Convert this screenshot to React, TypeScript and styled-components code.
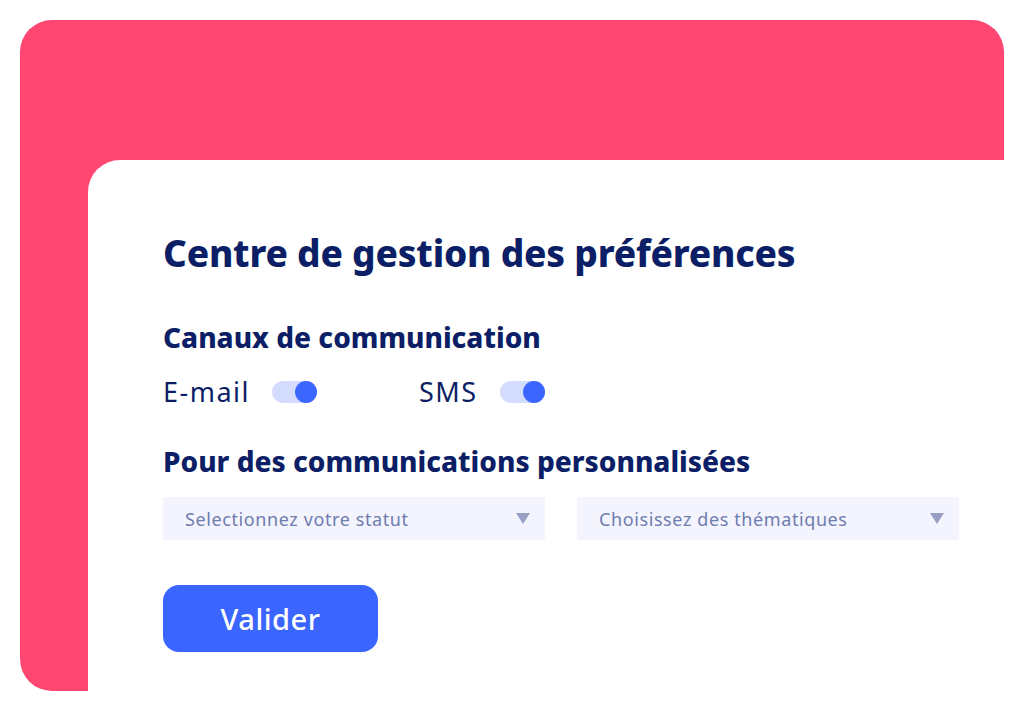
import React, { useState } from 'react';
import styled, { createGlobalStyle } from 'styled-components';

const GlobalStyle = createGlobalStyle`
  html, body {
    margin: 0;
    padding: 0;
    background: #ffffff;
  }
  body {
    font-family: 'Noto Sans', 'Open Sans', sans-serif;
    color: #0c1f66;
  }
`;

const Page = styled.div`
  width: 1024px;
  height: 711px;
  padding: 20px;
  box-sizing: border-box;
  overflow: hidden;
`;

const Frame = styled.div`
  height: 671px;
  background: #ff4772;
  border-radius: 32px 32px 0 32px;
  padding: 140px 0 0 68px;
  box-sizing: border-box;
  overflow: hidden;
  display: flex;
`;

const Card = styled.div`
  flex: 1;
  background: #ffffff;
  border-top-left-radius: 32px;
  padding: 69px 0 0 75px;
  display: flex;
  flex-direction: column;
  align-items: flex-start;
`;

const Title = styled.h1`
  margin: 0;
  font-size: 37px;
  font-weight: 800;
  line-height: 48px;
  letter-spacing: -0.2px;
`;

const Section = styled.h2<{ $top: number }>`
  margin: ${(p) => p.$top}px 0 0;
  font-size: 28px;
  font-weight: 800;
  line-height: 36px;
`;

const ChannelRow = styled.div`
  display: flex;
  align-items: center;
  margin-top: 19px;
`;

const Channel = styled.label`
  display: flex;
  align-items: center;
  gap: 22px;
  width: 256px;
  font-size: 27px;
  line-height: 36px;
  letter-spacing: 1.5px;
`;

const Track = styled.button<{ $on: boolean }>`
  width: 45px;
  height: 22px;
  border: none;
  padding: 0;
  border-radius: 11px;
  background: #d3dcff;
  display: flex;
  justify-content: ${(p) => (p.$on ? 'flex-end' : 'flex-start')};
  cursor: pointer;
`;

const Knob = styled.span`
  width: 22px;
  height: 22px;
  border-radius: 50%;
  background: #3b66ff;
`;

const Selects = styled.div`
  display: flex;
  gap: 32px;
  margin-top: 18px;
`;

const Select = styled.div`
  width: 382px;
  height: 43px;
  background: #f3f4fe;
  border-radius: 2px;
  display: flex;
  align-items: center;
  justify-content: space-between;
  padding: 0 15px 0 22px;
  box-sizing: border-box;
  font-size: 18px;
  letter-spacing: 0.6px;
  color: #6f7caf;
`;

const Arrow = styled.span`
  width: 0;
  height: 0;
  border-left: 7px solid transparent;
  border-right: 7px solid transparent;
  border-top: 11px solid #97a0c4;
`;

const Submit = styled.button`
  margin-top: 45px;
  width: 215px;
  height: 67px;
  border: none;
  border-radius: 16px;
  background: #3a66ff;
  color: #ffffff;
  font-family: 'Noto Sans', sans-serif;
  font-size: 29px;
  font-weight: 500;
  letter-spacing: 0.5px;
  cursor: pointer;
`;

const Toggle = ({ on, onClick }: { on: boolean; onClick: () => void }) => (
  <Track $on={on} onClick={onClick}>
    <Knob />
  </Track>
);

export default function App() {
  const [email, setEmail] = useState(true);
  const [sms, setSms] = useState(true);

  return (
    <>
      <GlobalStyle />
      <Page>
        <Frame>
          <Card>
            <Title>Centre de gestion des préférences</Title>
            <Section $top={42}>Canaux de communication</Section>
            <ChannelRow>
              <Channel>
                E-mail
                <Toggle on={email} onClick={() => setEmail(!email)} />
              </Channel>
              <Channel>
                SMS
                <Toggle on={sms} onClick={() => setSms(!sms)} />
              </Channel>
            </ChannelRow>
            <Section $top={33}>Pour des communications personnalisées</Section>
            <Selects>
              <Select>
                Selectionnez votre statut
                <Arrow />
              </Select>
              <Select>
                Choisissez des thématiques
                <Arrow />
              </Select>
            </Selects>
            <Submit>Valider</Submit>
          </Card>
        </Frame>
      </Page>
    </>
  );
}
